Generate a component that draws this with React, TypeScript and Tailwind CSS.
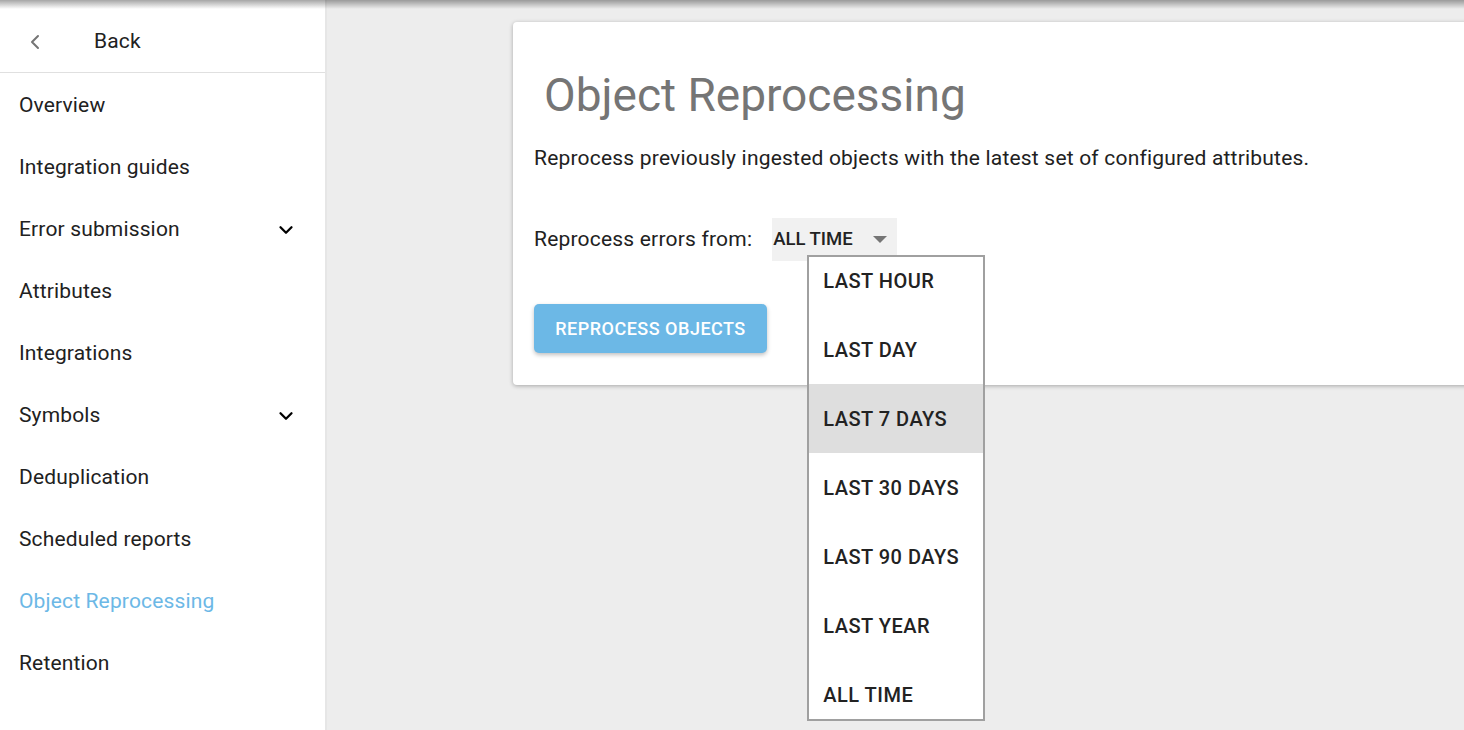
import { ChevronLeft, ChevronDown } from "lucide-react";

const navItems = [
  { label: "Overview" },
  { label: "Integration guides" },
  { label: "Error submission", expandable: true },
  { label: "Attributes" },
  { label: "Integrations" },
  { label: "Symbols", expandable: true },
  { label: "Deduplication" },
  { label: "Scheduled reports" },
  { label: "Object Reprocessing", active: true },
  { label: "Retention" },
];

const ranges = ["LAST HOUR", "LAST DAY", "LAST 7 DAYS", "LAST 30 DAYS", "LAST 90 DAYS", "LAST YEAR", "ALL TIME"];

function Sidebar() {
  return (
    <aside className="w-[327px] shrink-0 bg-white border-r-2 border-[#e6e6e6] h-full flex flex-col">
      <div className="h-[73px] pt-[12px] flex items-center border-b border-[#e0e0e0] shrink-0">
        <ChevronLeft className="ml-[23px] w-[24px] h-[24px] text-[#757575]" strokeWidth={2} />
        <span className="ml-[47px] text-[21px] tracking-[0.15px] text-[#212121]">Back</span>
      </div>
      {navItems.map((item) => (
        <div key={item.label} className="h-[62px] pt-[3px] flex items-center justify-between pl-[19px] pr-[28px] shrink-0">
          <span className={`text-[21px] tracking-[0.15px] ${item.active ? "text-[#6cb8e6]" : "text-[#212121]"}`}>
            {item.label}
          </span>
          {item.expandable && <ChevronDown className="w-[22px] h-[22px] text-black" strokeWidth={2.5} />}
        </div>
      ))}
    </aside>
  );
}

function RangeSelect() {
  return (
    <div className="relative">
      <div className="h-[43px] w-[125px] bg-[#f1f1f1] flex items-center pl-px">
        <span className="text-[18.5px] font-medium text-[#222]">ALL TIME</span>
        <svg className="ml-[20px]" width="14" height="7" viewBox="0 0 14 7">
          <path d="M0 0 L14 0 L7 7 Z" fill="#757575" />
        </svg>
      </div>
      <div className="absolute left-[35px] top-[37px] w-[178px] h-[466px] border-2 border-[#a0a0a0] bg-white overflow-hidden z-10">
        <div className="-mt-[11px]">
          {ranges.map((r) => (
            <div
              key={r}
              className={`h-[69px] flex items-center pl-[14px] text-[20px] tracking-[0.5px] font-medium text-[#222] ${
                r === "LAST 7 DAYS" ? "bg-[#dedede]" : ""
              }`}
            >
              {r}
            </div>
          ))}
        </div>
      </div>
    </div>
  );
}

export default function App() {
  return (
    <div
      className="relative w-[1464px] h-[730px] overflow-hidden bg-[#ededed] flex"
      style={{ fontFamily: "Roboto, 'Noto Sans', sans-serif" }}
    >
      <div className="absolute top-0 left-0 right-0 h-[9px] bg-gradient-to-b from-black/35 to-transparent z-20" />
      <Sidebar />
      <main className="flex-1 pl-[186px] pt-[22px]">
        <div className="bg-white rounded-[4px] shadow-[0_1px_4px_rgba(0,0,0,0.3)] w-[1000px] pl-[21px] pt-[67px] pb-[32px]">
          <h1 className="ml-[10px] text-[46px] leading-[56px] -mt-[22px] text-[#757575] font-normal">Object Reprocessing</h1>
          <p className="mt-[21px] text-[21px] tracking-[0.2px] leading-[28px] text-[#212121] whitespace-nowrap">
            Reprocess previously ingested objects with the latest set of configured attributes.
          </p>
          <div className="mt-[46px] flex items-center gap-[20px]">
            <span className="text-[21px] tracking-[0.2px] text-[#212121]">Reprocess errors from:</span>
            <RangeSelect />
          </div>
          <button className="mt-[43px] h-[49px] w-[233px] rounded-[5px] bg-[#6cb8e6] text-white text-[18px] tracking-[0.5px] font-medium shadow-[0_2px_4px_rgba(0,0,0,0.25)]">
            REPROCESS OBJECTS
          </button>
        </div>
      </main>
    </div>
  );
}
